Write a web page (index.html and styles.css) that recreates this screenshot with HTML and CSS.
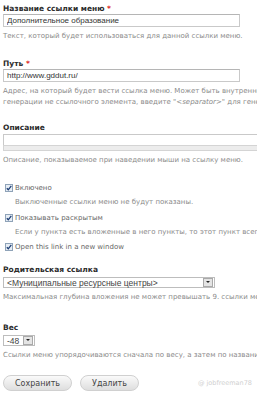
FILE: index.html
```html
<!DOCTYPE html>
<html lang="ru">
<head>
  <meta charset="UTF-8" />
  <meta name="viewport" content="width=device-width, initial-scale=1.0" />
  <title>Ссылка меню</title>
  <link rel="stylesheet" href="styles.css">
</head>
<body>
  <form class="menu-form">
    <div class="form-item">
      <label class="field-label">Название ссылки меню <span class="required">*</span></label>
      <input class="text-input" type="text" value="Дополнительное образование">
      <div class="description">Текст, который будет использоваться для данной ссылки меню.</div>
    </div>

    <div class="form-item tight">
      <label class="field-label">Путь <span class="required">*</span></label>
      <input class="text-input" type="text" value="http://www.gddut.ru/">
      <div class="description lines">
        <span>Адрес, на который будет вести ссылка меню. Может быть внутренней ссылкой Drupal или внешним URL.</span>
        <span>генерации не ссылочного элемента, введите "<em>&lt;separator&gt;</em>" для генерации разделителя.</span>
      </div>
    </div>

    <div class="form-item">
      <label class="field-label">Описание</label>
      <div class="textarea"></div>
      <div class="grippie"></div>
      <div class="description">Описание, показываемое при наведении мыши на ссылку меню.</div>
    </div>

    <div class="form-item check-item">
      <label class="check-label">
        <svg class="checkbox" width="8" height="8" viewBox="0 0 8 8"><rect x="0.5" y="0.5" width="7" height="7" fill="#e6edf5" stroke="#8fa3b8"/><path d="M1.8 4.2 L3.3 5.8 L6.3 1.9" fill="none" stroke="#1f3f74" stroke-width="1.3"/></svg>
        Включено
      </label>
      <div class="description indent">Выключенные ссылки меню не будут показаны.</div>
    </div>

    <div class="form-item check-item">
      <label class="check-label">
        <svg class="checkbox" width="8" height="8" viewBox="0 0 8 8"><rect x="0.5" y="0.5" width="7" height="7" fill="#e6edf5" stroke="#8fa3b8"/><path d="M1.8 4.2 L3.3 5.8 L6.3 1.9" fill="none" stroke="#1f3f74" stroke-width="1.3"/></svg>
        Показывать раскрытым
      </label>
      <div class="description indent">Если у пункта есть вложенные в него пункты, то этот пункт всегда будет раскрыт.</div>
    </div>

    <div class="form-item check-item last">
      <label class="check-label">
        <svg class="checkbox" width="8" height="8" viewBox="0 0 8 8"><rect x="0.5" y="0.5" width="7" height="7" fill="#e6edf5" stroke="#8fa3b8"/><path d="M1.8 4.2 L3.3 5.8 L6.3 1.9" fill="none" stroke="#1f3f74" stroke-width="1.3"/></svg>
        Open this link in a new window
      </label>
    </div>

    <div class="form-item wide">
      <label class="field-label">Родительская ссылка</label>
      <div class="select parent-select">
        <span class="select-value">&lt;Муниципальные ресурсные центры&gt;</span>
        <span class="select-arrow"></span>
      </div>
      <div class="description">Максимальная глубина вложения не может превышать 9. ссылки меню будут недоступны.</div>
    </div>

    <div class="form-item tight">
      <label class="field-label">Вес</label>
      <div class="select weight-select">
        <span class="select-value">-48</span>
        <span class="select-arrow"></span>
      </div>
      <div class="description">Ссылки меню упорядочиваются сначала по весу, а затем по названию.</div>
    </div>

    <div class="actions">
      <button type="button" class="btn save">Сохранить</button>
      <button type="button" class="btn">Удалить</button>
      <span class="watermark">@ jobfreeman78</span>
    </div>
  </form>
</body>
</html>
```

FILE: styles.css
```css
body {
  margin: 0;
  background: #fff;
  font-family: 'DejaVu Sans', Verdana, sans-serif;
  color: #333;
  overflow: hidden;
}
.menu-form {
  width: 340px;
  padding: 4px 0 0 3px;
}
.form-item {
  margin-bottom: 18px;
}
.form-item.tight {
  margin-bottom: 15px;
}
.form-item.wide {
  margin-bottom: 21px;
}
.field-label {
  display: block;
  font-weight: bold;
  font-size: 7.5px;
  line-height: 10px;
  color: #2b2b2b;
}
.required {
  color: #d22;
}
.text-input {
  display: block;
  box-sizing: border-box;
  width: 237px;
  height: 13px;
  margin: 0;
  padding: 0 3px;
  border: 1px solid #c9c9c9;
  border-top-color: #b5b5b5;
  font-family: 'Liberation Sans', Arial, sans-serif;
  font-size: 8px;
  color: #333;
  background: #fff;
}
.description {
  margin-top: 4px;
  font-size: 7px;
  line-height: 10px;
  color: #8a8a8a;
  white-space: nowrap;
}
.description.lines span {
  display: block;
  line-height: 11px;
}
.description em {
  font-style: italic;
}
.description.indent {
  padding-left: 12px;
}
.textarea {
  box-sizing: border-box;
  width: 300px;
  height: 11px;
  margin-top: 1px;
  border: 1px solid #c9c9c9;
  border-bottom: none;
  background: #fff;
}
.grippie {
  box-sizing: border-box;
  width: 300px;
  height: 6px;
  border: 1px solid #d4d4d4;
  background: #ececec;
}
.check-item {
  margin-bottom: 6px;
}
.check-item + .check-item {
  margin-bottom: 5px;
}
.check-item.last {
  margin-bottom: 13px;
}
.check-label {
  display: flex;
  align-items: center;
  gap: 2px;
  padding-left: 2px;
  height: 10px;
  font-size: 7px;
  color: #666;
}
.checkbox {
  flex: none;
}
.select {
  display: flex;
  align-items: center;
  box-sizing: border-box;
  height: 11px;
  margin-top: 2px;
  border: 1px solid #bdbdbd;
  background: #fff;
  font-family: 'Liberation Sans', Arial, sans-serif;
  font-size: 8.5px;
  color: #444;
}
.parent-select {
  width: 212px;
}
.weight-select {
  width: 32px;
}
.select-value {
  flex: 1;
  padding-left: 3px;
  white-space: nowrap;
  overflow: hidden;
}
.select-arrow {
  position: relative;
  flex: none;
  width: 8px;
  height: 7px;
  margin-right: 1px;
  border: 1px solid #a9a9a9;
  background: #e4e4e4;
}
.select-arrow::after {
  content: "";
  position: absolute;
  left: 2px;
  top: 2px;
  border-left: 2px solid transparent;
  border-right: 2px solid transparent;
  border-top: 2px solid #222;
}
.actions {
  display: flex;
  align-items: center;
  gap: 8px;
  width: 249px;
}
.btn {
  height: 16px;
  padding: 0 11px;
  border: 1px solid #d0d0d0;
  border-radius: 8px;
  background: linear-gradient(#fafafa, #dedede);
  font-family: 'DejaVu Sans', Verdana, sans-serif;
  font-size: 8px;
  color: #444;
}
.btn.save {
  width: 69px;
}
.watermark {
  margin-left: auto;
  font-size: 6.5px;
  color: #d0d0d0;
}
```
